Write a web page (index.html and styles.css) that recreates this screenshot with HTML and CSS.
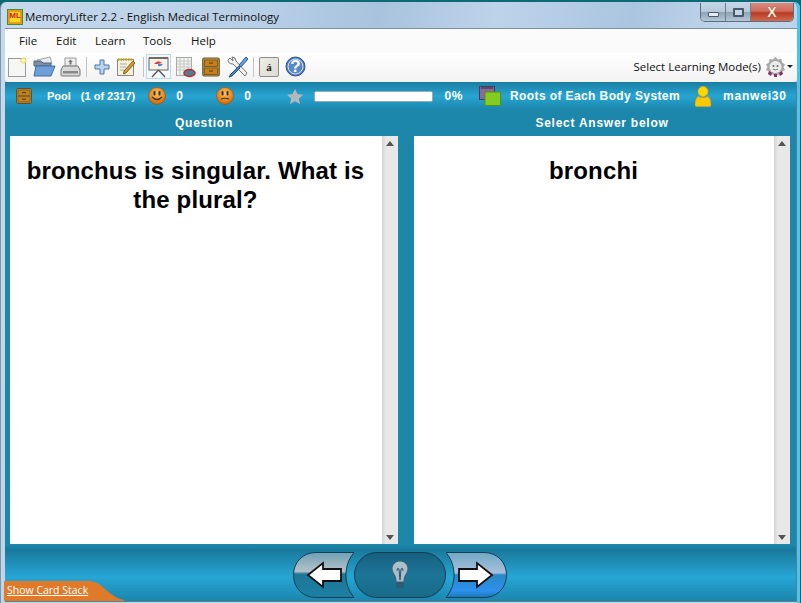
FILE: index.html
```html
<!DOCTYPE html>
<html lang="en">
<head>
<meta charset="utf-8">
<title>MemoryLifter 2.2 - English Medical Terminology</title>
<link rel="stylesheet" href="styles.css">
</head>
<body>
<div class="window">
  <header class="titlebar">
    <svg class="app-icon" width="16" height="16" viewBox="0 0 16 16"><rect x="0.5" y="0.5" width="15" height="15" fill="#f5c800" stroke="#3f8f3a"/><rect x="2" y="2" width="12" height="12" fill="#f8d820" stroke="#e8641c" stroke-width="1"/></svg>
    <span class="app-letters">ML</span>
    <span class="title">MemoryLifter 2.2 - English Medical Terminology</span>
    <div class="caption">
      <button class="cap cap-min"><i></i></button>
      <button class="cap cap-max"><i></i></button>
      <button class="cap cap-close">X</button>
    </div>
  </header>

  <nav class="menubar">
    <span>File</span><span>Edit</span><span>Learn</span><span>Tools</span><span>Help</span>
  </nav>

  <div class="toolbar">
    <div class="tool w-new"><svg width="20" height="22" viewBox="0 0 20 22"><rect x="1.5" y="2.5" width="17" height="18" fill="#f6f6f4" stroke="#9a9a9a"/><circle cx="16.5" cy="4.5" r="2.6" fill="#fff7b8" stroke="#efd64a"/></svg></div>
    <div class="tool w-open"><svg width="23" height="22" viewBox="0 0 23 22"><path d="M4 4 L17 1 L19 7 L6 10Z" fill="#e8eaec" stroke="#9aa"/><path d="M1 5 H8 L10 7 H18 V10 H1Z" fill="#7c8ea6" stroke="#56647a"/><path d="M3 10 H22 L18 20 H1Z" fill="#6f9fd8" stroke="#3f6ca8"/></svg></div>
    <div class="tool w-print"><svg width="21" height="22" viewBox="0 0 21 22"><path d="M5 2 H16 V10 H5Z" fill="#eee" stroke="#999"/><path d="M10.5 3.5 L13 6 H11.5 V8.500 H9.500 V6 H8Z" fill="#777"/><path d="M3 10 H18 L20 14 V19 Q20 20 19 20 H2 Q1 20 1 19 V14Z" fill="#d8d8d8" stroke="#777"/><rect x="3" y="15" width="15" height="2.500" fill="#8a8a8a"/></svg></div>
    <div class="sep"></div>
    <div class="tool w-add"><svg width="16" height="16" viewBox="0 0 16 16"><path d="M6 1 H10 V6 H15 V10 H10 V15 H6 V10 H1 V6 H6Z" fill="#bcd3ee" stroke="#4a78ad"/></svg></div>
    <div class="tool w-note"><svg width="20" height="20" viewBox="0 0 20 20"><rect x="1.5" y="2.5" width="16" height="16" fill="#f6f1dc" stroke="#8a8a80"/><path d="M2 2.500 H17" stroke="#c9a81e" stroke-width="2.500" stroke-dasharray="1.500 1"/><path d="M4 7 H11 M4 10 H10 M4 13 H8" stroke="#aaa"/><path d="M8 14 L17 4 L19 6 L10 16 L7.500 17Z" fill="#d89a30" stroke="#6a4a20" stroke-width="0.800"/></svg></div>
    <div class="sep sep-b"></div>
    <div class="tool w-show"><svg width="21" height="22" viewBox="0 0 21 22"><rect x="1" y="2" width="19" height="12" fill="#f4f2ea" stroke="#666"/><rect x="1" y="1" width="19" height="2" fill="#7a6a5a"/><path d="M6 8 Q10 3 14 7 L10 8Z" fill="#d84040"/><path d="M10 8 H15 Q13 11 10 10Z" fill="#4f86c8"/><path d="M10.500 14 L4 21 M10.500 14 L17 21" stroke="#555" stroke-width="1.300" fill="none"/></svg></div>
    <div class="tool w-table"><svg width="21" height="22" viewBox="0 0 21 22"><rect x="1.500" y="1.500" width="15" height="18" fill="#f2f2f0" stroke="#aaa"/><path d="M5 2 V19 M9 2 V19 M13 2 V19 M2 5 H16 M2 8 H16 M2 11 H16 M2 14 H16" stroke="#c4c8c4"/><ellipse cx="14.500" cy="17" rx="5.500" ry="3.500" fill="#4f7f90" stroke="#c02030" stroke-width="1.500"/></svg></div>
    <div class="tool w-drawer"><svg width="18" height="20" viewBox="0 0 18 20"><rect x="0.750" y="1" width="16.500" height="18" rx="1.500" fill="#c89a3c" stroke="#6b5a32" stroke-width="1.200"/><rect x="2.500" y="3" width="13" height="6.500" fill="#c97e1c" stroke="#5f4a20" stroke-width="0.700"/><rect x="2.500" y="11" width="13" height="6.500" fill="#c97e1c" stroke="#5f4a20" stroke-width="0.700"/><path d="M7 6 H11 M7 14 H11" stroke="#4a3a18"/></svg></div>
    <div class="tool w-tools"><svg width="22" height="22" viewBox="0 0 22 22"><path d="M3 2 L6 5 L5 1 Q9 1 9 5 L20 17 L18 20 L6 8 Q1 8 1 4Z" fill="#f0f0f0" stroke="#777"/><path d="M19 1 L21 3 L14 11 L12 9Z" fill="#5f9ee0" stroke="#2f5f9f"/><path d="M12 10 L4 18 L2 21 L5 20 L13 12Z" fill="#4a82c8" stroke="#24508a"/></svg></div>
    <div class="sep sep-c"></div>
    <div class="tool w-key"><span class="keycap">á</span></div>
    <div class="tool w-help"><svg width="21" height="21" viewBox="0 0 21 21"><circle cx="10.500" cy="10.500" r="9.500" fill="#4a78b8" stroke="#2f5590"/><circle cx="10.500" cy="10.500" r="7.500" fill="#5a88c4" stroke="#dfe8f4" stroke-width="1"/></svg><span class="help-q">?</span></div>
    <div class="mode">
      <span>Select Learning Mode(s)</span>
      <svg width="21" height="22" viewBox="0 0 21 22"><path d="M10.500 1 L13 3.500 L16.500 3 L17 6.500 L20 8.500 L18.500 11 L20 14 L17 15.500 L16.500 19 L13 18.500 L10.500 21 L8 18.500 L4.500 19 L4 15.500 L1 14 L2.500 11 L1 8.500 L4 6.500 L4.500 3 L8 3.500Z" fill="#a8a8a8"/><circle cx="10.500" cy="11" r="6" fill="#ececec"/><circle cx="8.500" cy="10" r="1" fill="#666"/><circle cx="12.500" cy="10" r="1" fill="#666"/><path d="M8 13 Q10.500 15 13 13" stroke="#777" fill="none"/><path d="M4 15 L7 17 L6 20 L3 18Z M17 15 L14 17 L15 20 L18 18Z M9 18 H12 V21 H9Z" fill="#8a2a68"/></svg>
      <i class="caret"></i>
    </div>
  </div>

  <main class="stage">
    <div class="infobar">
      <svg class="i-drawer" width="16" height="16" viewBox="0 0 16 16"><rect x="0.500" y="0.500" width="15" height="15" rx="1" fill="#b8923c" stroke="#5f5228"/><rect x="2" y="2" width="12" height="5.500" fill="#c4801c" stroke="#5f4a20" stroke-width="0.600"/><rect x="2" y="8.500" width="12" height="5.500" fill="#c4801c" stroke="#5f4a20" stroke-width="0.600"/><path d="M6 4.700 H10 M6 11.200 H10" stroke="#4a3a18"/></svg>
      <span class="txt pool">Pool</span>
      <span class="txt count">(1 of 2317)</span>
      <svg class="i-smile" width="18" height="18" viewBox="0 0 18 18"><defs><radialGradient id="sm" cx="0.500" cy="0.350" r="0.650"><stop offset="0" stop-color="#fbc060"/><stop offset="0.600" stop-color="#ee8c20"/><stop offset="1" stop-color="#c86008"/></radialGradient></defs><circle cx="9" cy="9" r="8.500" fill="url(#sm)" stroke="#8a5a20" stroke-width="0.600"/><rect x="5.500" y="4" width="2" height="4.500" rx="1" fill="#333"/><rect x="10.500" y="4" width="2" height="4.500" rx="1" fill="#333"/><path d="M4 10 Q9 15 14 10" stroke="#333" fill="none" stroke-width="1.200"/></svg>
      <span class="txt num1">0</span>
      <svg class="i-sad" width="18" height="18" viewBox="0 0 18 18"><circle cx="9" cy="9" r="8.500" fill="url(#sm)" stroke="#8a5a20" stroke-width="0.600"/><rect x="5.500" y="4" width="2" height="4.500" rx="1" fill="#333"/><rect x="10.500" y="4" width="2" height="4.500" rx="1" fill="#333"/><path d="M5 12 Q9 10.500 13 12" stroke="#333" fill="none" stroke-width="1.200"/></svg>
      <span class="txt num2">0</span>
      <svg class="i-star" width="16" height="15" viewBox="0 0 16 15"><path d="M8 0 L10.400 5 L16 5.700 L11.900 9.500 L13 15 L8 12.300 L3 15 L4.100 9.500 L0 5.700 L5.600 5Z" fill="#b4b8bc"/></svg>
      <div class="progress"></div>
      <span class="txt pct">0%</span>
      <svg class="i-box" width="23" height="21" viewBox="0 0 23 21"><rect x="0.500" y="0.500" width="15" height="13" fill="#8a6a9a" stroke="#4a3a5a"/><path d="M2 1 H14 V3 H2Z" fill="#5a4a6a"/><path d="M6 6 H21.500 V19.500 H6Z" fill="#84cc20" stroke="#4f9410"/></svg>
      <span class="txt system">Roots of Each Body System</span>
      <svg class="i-user" width="16" height="21" viewBox="0 0 16 21"><circle cx="8" cy="5.500" r="5" fill="#ffd800" stroke="#f0a800" stroke-width="0.600"/><path d="M3 10.500 Q8 13 13 10.500 Q16 13 16 19 Q16 20.500 14 20.500 H2 Q0 20.500 0 19 Q0 13 3 10.500Z" fill="#ffc800" stroke="#f09800" stroke-width="0.600"/></svg>
      <span class="txt user">manwei30</span>
    </div>

    <div class="heads">
      <div>Question</div>
      <div>Select Answer below</div>
    </div>

    <div class="panels">
      <section class="panel">
        <div class="card">bronchus is singular. What is the plural?</div>
        <div class="scroll"><i class="up"></i><i class="down"></i></div>
      </section>
      <section class="panel">
        <div class="card">bronchi</div>
        <div class="scroll"><i class="up"></i><i class="down"></i></div>
      </section>
    </div>

    <div class="navbar">
      <svg width="61" height="46" viewBox="0 0 61 46">
        <defs>
          <linearGradient id="lb" x1="0" y1="0" x2="0" y2="1"><stop offset="0" stop-color="#6fa0b4"/><stop offset="0.420" stop-color="#b4c2c8"/><stop offset="0.480" stop-color="#1f7696"/><stop offset="1" stop-color="#1b80a4"/></linearGradient>
          <linearGradient id="rb" x1="0" y1="0" x2="0" y2="1"><stop offset="0" stop-color="#6fa8c4"/><stop offset="0.450" stop-color="#a8c0dc"/><stop offset="0.500" stop-color="#2a88c8"/><stop offset="0.850" stop-color="#2c90ec"/><stop offset="1" stop-color="#1c78b8"/></linearGradient>
          <linearGradient id="mb" x1="0" y1="0" x2="0" y2="1"><stop offset="0" stop-color="#185f80"/><stop offset="0.500" stop-color="#1c7596"/><stop offset="1" stop-color="#186a8a"/></linearGradient>
        </defs>
        <path d="M61 0.500 H23 C10 0.500 0.500 10 0.500 23 C0.500 36 10 45.500 23 45.500 H61 C55 38 53 31 53 23 C53 15 55 8 61 0.500Z" fill="url(#lb)" stroke="#123f55"/>
        <path d="M15 23 L30 11 V17 H48 V29 H30 V35Z" fill="#fff" stroke="#111" stroke-width="1.800"/>
      </svg>
      <svg width="92" height="46" viewBox="0 0 92 46">
        <rect x="0.500" y="0.500" width="91" height="45" rx="22.500" fill="url(#mb)" stroke="#0f3d52"/>
        <path d="M46 9 C41 9 38 13 38 17 C38 21 42 23 42 28 V30 H50 V28 C50 23 54 21 54 17 C54 13 51 9 46 9Z" fill="#a9c0cc" stroke="#3d5f72"/>
        <path d="M43 19 Q43 15 45 17 L46 28 L47 17 Q49 15 49 19" fill="none" stroke="#2f5166"/>
        <rect x="42" y="30" width="8" height="6" rx="2" fill="#2d5a72"/>
      </svg>
      <svg width="61" height="46" viewBox="0 0 61 46">
        <path d="M0 0.500 H38 C51 0.500 60.500 10 60.500 23 C60.500 36 51 45.500 38 45.500 H0 C6 38 8 31 8 23 C8 15 6 8 0 0.500Z" fill="url(#rb)" stroke="#123f55"/>
        <path d="M46 23 L31 11 V17 H13 V29 H31 V35Z" fill="#fff" stroke="#111" stroke-width="1.800"/>
      </svg>
    </div>

    <div class="stack">
      <svg width="120" height="20" viewBox="0 0 120 20"><path d="M0 0 H86 C96 1 100 8 107 13 C111 16 115 18 120 19 V20 H0Z" fill="#e07a28"/></svg>
      <a class="stack-link">Show Card Stack</a>
    </div>
  </main>
</div>
</body>
</html>
```

FILE: styles.css
```css
* { box-sizing: border-box; }
html, body { margin: 0; padding: 0; }
body {
  width: 801px;
  height: 603px;
  overflow: hidden;
  background: #0c6a72;
  font-family: "Open Sans", "Noto Sans", sans-serif;
}
.window {
  width: 800px;
  height: 602px;
  margin-top: 2px;
  padding: 0 3px 2px 4px;
  display: flex;
  flex-direction: column;
  border-radius: 6px 6px 0 0;
  border-left: 1px solid #7d96a8;
  background: linear-gradient(100deg, #c7d9ec 0%, #b6cee6 30%, #a9c3de 42%, #bdd3ea 55%, #abc5e0 70%, #c3d7ec 82%, #b0c9e2 100%);
  box-shadow: inset -3px 0 0 #4cc4ee, inset 0 -2px 0 #a4dcf2;
  position: relative;
}
.titlebar {
  flex: 0 0 26px;
  display: flex;
  align-items: center;
  padding-left: 2px;
  position: relative;
}
.app-icon { flex: none; margin-top: 3px; }
.app-letters {
  position: absolute;
  left: 3px;
  top: 9px;
  width: 14px;
  text-align: center;
  font: bold 8px/9px "Liberation Sans", sans-serif;
  color: #d81818;
}
.title {
  margin: 2px 0 0 2px;
  font-size: 11.5px;
  color: #111;
  white-space: nowrap;
}
.caption {
  position: absolute;
  top: 1px;
  right: 3px;
  display: flex;
  height: 19px;
  border: 1px solid #5d6e80;
  border-top: 0;
  border-radius: 0 0 5px 5px;
  overflow: hidden;
}
.cap {
  padding: 0;
  border: 0;
  display: flex;
  align-items: center;
  justify-content: center;
  background: linear-gradient(#c6d6e6 0%, #b6c8da 48%, #8ea4b8 52%, #b4c6d6 100%);
  border-right: 1px solid #6b7d8e;
}
.cap-min { width: 25px; }
.cap-max { width: 25px; }
.cap-close {
  width: 42px;
  border-right: 0;
  background: linear-gradient(#d88a80 0%, #cf6a58 46%, #b83a22 54%, #d06a50 100%);
  color: #f4ecd8;
  font: bold 14px/17px "Liberation Sans", sans-serif;
  text-shadow: 0 0 1px #432;
}
.cap-min i { width: 11px; height: 5px; margin-top: 5px; background: #e8edf2; border: 1px solid #47596b; border-radius: 1px; }
.cap-max i { width: 11px; height: 9px; background: #c8d6e2; border: 2px solid #47596b; border-radius: 1px; }

.menubar {
  flex: 0 0 25px;
  display: flex;
  align-items: center;
  padding: 0 0 2px 14px;
  background: #fbfbfb;
  border-top: 1px solid #7c8f9f;
  font-size: 11.5px;
  color: #111;
}
.menubar span:nth-child(1) { width: 37px; }
.menubar span:nth-child(2) { width: 39px; }
.menubar span:nth-child(3) { width: 48px; }
.menubar span:nth-child(4) { width: 48px; }

.toolbar {
  flex: 0 0 29px;
  display: flex;
  align-items: center;
  padding: 0 0 2px 2px;
  background: linear-gradient(#fff, #f2f2f2);
  border-radius: 0 0 4px 4px;
  position: relative;
  z-index: 1;
}
.tool { flex: none; display: flex; align-items: center; justify-content: center; position: relative; }
.w-new { width: 20px; }
.w-open { width: 23px; margin-left: 6px; }
.w-print { width: 21px; margin-left: 4px; }
.sep { flex: none; width: 1px; height: 20px; background: #c4c4c4; margin-left: 5px; }
.w-add { width: 16px; margin-left: 7px; }
.w-note { width: 20px; margin-left: 6px; }
.sep-b { margin-left: 7px; }
.w-show { width: 25px; height: 25px; margin-left: 2px; background: #f2f8fd; border: 1px solid #b7d9f1; }
.w-table { width: 21px; margin-left: 4px; }
.w-drawer { width: 18px; margin-left: 6px; }
.w-tools { width: 22px; margin-left: 7px; }
.sep-c { margin-left: 4px; }
.w-key { margin-left: 5px; }
.keycap {
  display: block;
  width: 20px;
  height: 20px;
  background: linear-gradient(135deg, #efefe8, #dadad2);
  border: 1px solid #8c8c84;
  border-radius: 2px;
  color: #222;
  text-align: center;
  font: bold 11px/19px "Liberation Serif", serif;
}
.w-help { width: 21px; margin-left: 6px; }
.help-q {
  position: absolute;
  inset: 0;
  text-align: center;
  color: #fff;
  font: bold 17px/21px "Liberation Sans", sans-serif;
}
.mode {
  margin-left: auto;
  display: flex;
  align-items: center;
  padding-right: 4px;
  font-size: 11.5px;
  color: #111;
  white-space: nowrap;
}
.mode span { margin-right: 1px; }
.mode svg { margin-left: 3px; }
.caret {
  width: 0;
  height: 0;
  margin-left: 1px;
  border: 3px solid transparent;
  border-top: 3px solid #222;
  border-bottom: 0;
}

.stage {
  flex: 1;
  display: flex;
  flex-direction: column;
  position: relative;
  min-height: 0;
  border-right: 1px solid #66788a;
  border-bottom: 1px solid #66788a;
  background: linear-gradient(#1c86ab 0, #1c86ab 463px, #19799c 468px, #27a6d4 495px, #1a86ad 100%);
}
.infobar {
  flex: 0 0 28px;
  display: flex;
  align-items: center;
  padding-left: 11px;
  background: linear-gradient(#1a7da2, #27a5d2 50%, #1c86ab);
}
.txt {
  font: bold 12px/16px "Liberation Sans", sans-serif;
  color: #fff;
  white-space: nowrap;
  letter-spacing: 0.4px;
}
.infobar svg { flex: none; }
.pool { margin-left: 15px; font-size: 11px; letter-spacing: 0; }
.count { margin-left: 10px; font-size: 11px; letter-spacing: 0; }
.i-smile { margin-left: 13px; }
.num1 { margin-left: 10px; }
.i-sad { margin-left: 33px; }
.num2 { margin-left: 10px; }
.i-star { margin-left: 36px; }
.progress {
  flex: none;
  width: 119px;
  height: 11px;
  margin-left: 11px;
  background: #fff;
  border: 1px solid #9aa8b0;
  border-radius: 2px;
}
.pct { margin-left: 11px; letter-spacing: 0.6px; }
.i-box { margin-left: 16px; }
.system { margin-left: 8px; }
.i-user { margin-left: 15px; }
.user { margin-left: 12px; letter-spacing: 0.8px; }

.heads {
  flex: 0 0 26px;
  display: grid;
  grid-template-columns: 388px 376px;
  column-gap: 16px;
  padding-left: 5px;
  align-items: center;
  color: #fff;
  font: bold 12px/16px "Liberation Sans", sans-serif;
  letter-spacing: 0.75px;
  text-align: center;
}
.panels {
  flex: 0 0 408px;
  display: grid;
  grid-template-columns: 388px 376px;
  column-gap: 16px;
  padding-left: 5px;
}
.panel { display: flex; background: #fff; min-height: 0; }
.card {
  flex: 1;
  padding: 20px 14px 0 13px;
  text-align: center;
  font: bold 24px/29px "Liberation Sans", sans-serif;
  letter-spacing: 0.15px;
  color: #000;
}
.scroll {
  flex: 0 0 16px;
  display: flex;
  flex-direction: column;
  justify-content: space-between;
  align-items: center;
  padding: 5px 0 4px;
  background: linear-gradient(90deg, #d4d4d4, #e8e8e8 25%);
}
.scroll i { width: 0; height: 0; border: 4px solid transparent; }
.scroll .up { border-top: 0; border-bottom: 5px solid #555; }
.scroll .down { border-bottom: 0; border-top: 5px solid #555; }

.navbar {
  flex: 1;
  display: flex;
  justify-content: center;
  padding-top: 8px;
  padding-right: 2px;
}
.navbar svg { flex: none; }
.stack {
  position: absolute;
  left: -1px;
  bottom: 0;
  width: 120px;
  height: 20px;
}
.stack svg { position: absolute; inset: 0; }
.stack-link {
  position: absolute;
  left: 3px;
  top: 2px;
  font-size: 10.5px;
  line-height: 15px;
  color: #fff;
  text-decoration: underline;
  white-space: nowrap;
}
```
